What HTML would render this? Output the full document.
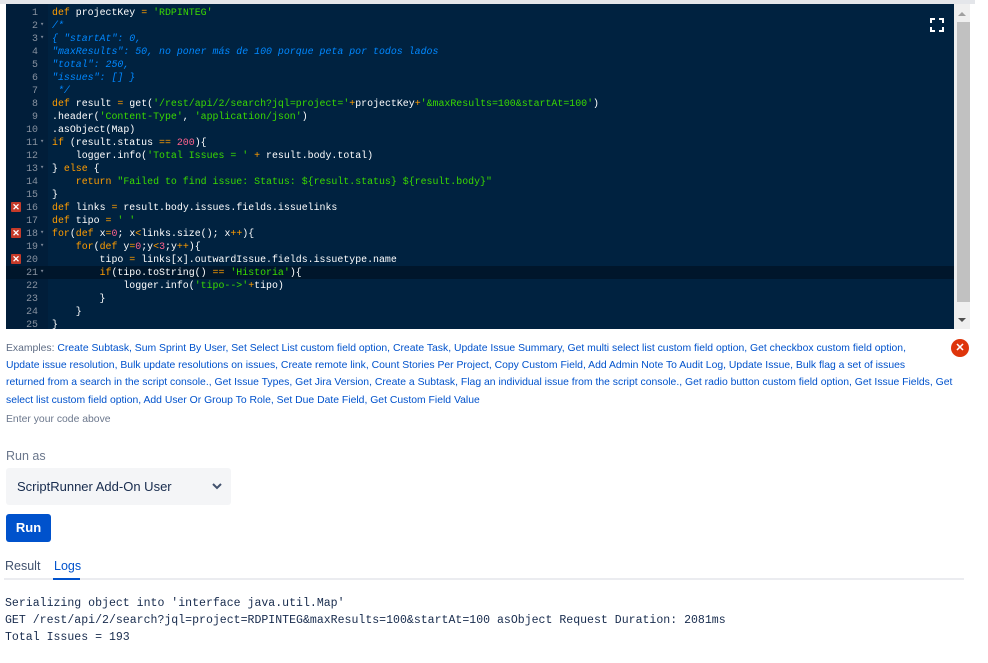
<!DOCTYPE html>
<html><head><meta charset="utf-8"><style>
body{margin:0;background:#fff;width:988px;height:663px;overflow:hidden;font-family:"Liberation Sans",sans-serif;position:relative}
.topbar{position:absolute;left:0;top:0;width:975px;height:4px;background:#e4e6ea}
.ed{position:absolute;left:6px;top:4px;width:948px;height:325px;background:#002240;overflow:hidden}
.gut{position:absolute;left:0;top:0;width:42px;height:325px;background:#011e3a}
.sb{position:absolute;left:954px;top:4px;width:16px;height:325px;background:#efefef}
.thumb{position:absolute;left:957px;top:22px;width:13px;height:280px;background:#c1c1c1}
pre{margin:0;position:absolute;left:0;top:1.5px;font-family:"Liberation Mono",monospace;font-size:9.92px;line-height:13.04px;color:#fff}
.l{height:13.04px;position:relative;white-space:pre}
.n{display:inline-block;width:32px;text-align:right;color:#8892a0;margin-right:14px}
.f{position:absolute;left:34px;color:#7a8696;font-size:7px}
.x{position:absolute;left:5px;top:1px;width:10px;height:10px;background:#c53a29;color:#fff;font:bold 9px/10px "Liberation Sans",sans-serif;text-align:center;border-radius:1px}
.hl{background:#00162b}
.k{color:#ff9d00}.s{color:#3ad900}.c{color:#0088ff;font-style:italic}.m{color:#ff628c}
.ex{position:absolute;left:6px;top:340px;width:975px;font-size:10.4px;line-height:17.2px;color:#5e6c84;white-space:nowrap}
.ex a{color:#0052cc;text-decoration:none}
.err{position:absolute;left:951px;top:339px;width:18px;height:18px;border-radius:50%;background:#de350b;color:#fff;font:bold 11px/18px "Liberation Sans";text-align:center}
</style></head><body>
<div class="topbar"></div>
<div class="ed"><div class="gut"></div>
<pre><div class="l"><span class="n">1</span><span class="k">def</span> projectKey <span class="k">=</span> <span class="s">'RDPINTEG'</span></div><div class="l"><span class="n">2</span><span class="f">▾</span><span class="c">/*</span></div><div class="l"><span class="n">3</span><span class="f">▾</span><span class="c">{ "startAt": 0,</span></div><div class="l"><span class="n">4</span><span class="c">"maxResults": 50, no poner más de 100 porque peta por todos lados</span></div><div class="l"><span class="n">5</span><span class="c">"total": 250,</span></div><div class="l"><span class="n">6</span><span class="c">"issues": [] }</span></div><div class="l"><span class="n">7</span><span class="c"> */</span></div><div class="l"><span class="n">8</span><span class="k">def</span> result <span class="k">=</span> get(<span class="s">'/rest/api/2/search?jql=project='</span><span class="k">+</span>projectKey<span class="k">+</span><span class="s">'&amp;maxResults=100&amp;startAt=100'</span>)</div><div class="l"><span class="n">9</span>.header(<span class="s">'Content-Type'</span>, <span class="s">'application/json'</span>)</div><div class="l"><span class="n">10</span>.asObject(Map)</div><div class="l"><span class="n">11</span><span class="f">▾</span><span class="k">if</span> (result.status <span class="k">==</span> <span class="m">200</span>){</div><div class="l"><span class="n">12</span>    logger.info(<span class="s">'Total Issues = '</span> <span class="k">+</span> result.body.total)</div><div class="l"><span class="n">13</span><span class="f">▾</span>} <span class="k">else</span> {</div><div class="l"><span class="n">14</span>    <span class="k">return</span> <span class="s">"Failed to find issue: Status: ${result.status} ${result.body}"</span></div><div class="l"><span class="n">15</span>}</div><div class="l"><span class="x">✕</span><span class="n">16</span><span class="k">def</span> links <span class="k">=</span> result.body.issues.fields.issuelinks</div><div class="l"><span class="n">17</span><span class="k">def</span> tipo <span class="k">=</span> <span class="s">' '</span></div><div class="l"><span class="x">✕</span><span class="n">18</span><span class="f">▾</span><span class="k">for</span>(<span class="k">def</span> x<span class="k">=</span><span class="m">0</span>; x<span class="k">&lt;</span>links.size(); x<span class="k">++</span>){</div><div class="l"><span class="n">19</span><span class="f">▾</span>    <span class="k">for</span>(<span class="k">def</span> y<span class="k">=</span><span class="m">0</span>;y<span class="k">&lt;</span><span class="m">3</span>;y<span class="k">++</span>){</div><div class="l"><span class="x">✕</span><span class="n">20</span>        tipo <span class="k">=</span> links[x].outwardIssue.fields.issuetype.name</div><div class="l hl" style="width:948px"><span class="n">21</span><span class="f">▾</span>        <span class="k">if</span>(tipo.toString() <span class="k">==</span> <span class="s">'Historia'</span>){</div><div class="l"><span class="n">22</span>            logger.info(<span class="s">'tipo--&gt;'</span><span class="k">+</span>tipo)</div><div class="l"><span class="n">23</span>        }</div><div class="l"><span class="n">24</span>    }</div><div class="l"><span class="n">25</span>}</div></pre>
<svg style="position:absolute;left:924px;top:14px" width="14" height="14" viewBox="0 0 14 14" fill="none" stroke="#fff" stroke-width="2"><path d="M1 5V1h4M9 1h4v4M13 9v4H9M5 13H1V9"/></svg>
</div>
<div class="sb"></div><div class="thumb"></div>
<div style="position:absolute;left:958px;top:12px;width:0;height:0;border-left:4px solid transparent;border-right:4px solid transparent;border-bottom:4px solid #a0a0a0"></div>
<div style="position:absolute;left:958px;top:318px;width:0;height:0;border-left:4px solid transparent;border-right:4px solid transparent;border-top:4px solid #505050"></div>
<div class="ex">Examples: <a>Create Subtask, Sum Sprint By User, Set Select List custom field option, Create Task, Update Issue Summary, Get multi select list custom field option, Get checkbox custom field option,<br>Update issue resolution, Bulk update resolutions on issues, Create remote link, Count Stories Per Project, Copy Custom Field, Add Admin Note To Audit Log, Update Issue, Bulk flag a set of issues<br>returned from a search in the script console., Get Issue Types, Get Jira Version, Create a Subtask, Flag an individual issue from the script console., Get radio button custom field option, Get Issue Fields, Get<br>select list custom field option, Add User Or Group To Role, Set Due Date Field, Get Custom Field Value</a></div>
<div class="err">✕</div>
<div style="position:absolute;left:6px;top:414px;font-size:10.4px;color:#6b778c">Enter your code above</div>
<div style="position:absolute;left:6px;top:449px;font-size:12.5px;color:#6b778c">Run as</div>
<div style="position:absolute;left:6px;top:468px;width:225px;height:37px;background:#f4f5f7;border-radius:3px"></div>
<div style="position:absolute;left:17px;top:479px;font-size:13px;color:#172b4d">ScriptRunner Add-On User</div>
<svg style="position:absolute;left:211px;top:482px" width="12" height="8" viewBox="0 0 12 8"><path d="M2 2l4 4 4-4" stroke="#42526e" stroke-width="2" fill="none"/></svg>
<div style="position:absolute;left:6px;top:514px;width:45px;height:28px;background:#0052cc;border-radius:3px;color:#fff;font-size:13px;font-weight:bold;line-height:28px;text-align:center">Run</div>
<div style="position:absolute;left:5px;top:559px;font-size:12.5px;color:#42526e">Result</div>
<div style="position:absolute;left:54px;top:559px;font-size:12.5px;color:#0052cc">Logs</div>
<div style="position:absolute;left:4px;top:578px;width:960px;height:2px;background:#ebecf0"></div>
<div style="position:absolute;left:53px;top:578px;width:27px;height:2px;background:#0052cc"></div>
<pre style="left:5px;top:596px;font-size:11.55px;line-height:16.8px;color:#172b4d">Serializing object into 'interface java.util.Map'
GET /rest/api/2/search?jql=project=RDPINTEG&amp;maxResults=100&amp;startAt=100 asObject Request Duration: 2081ms
Total Issues = 193</pre>
</body></html>
